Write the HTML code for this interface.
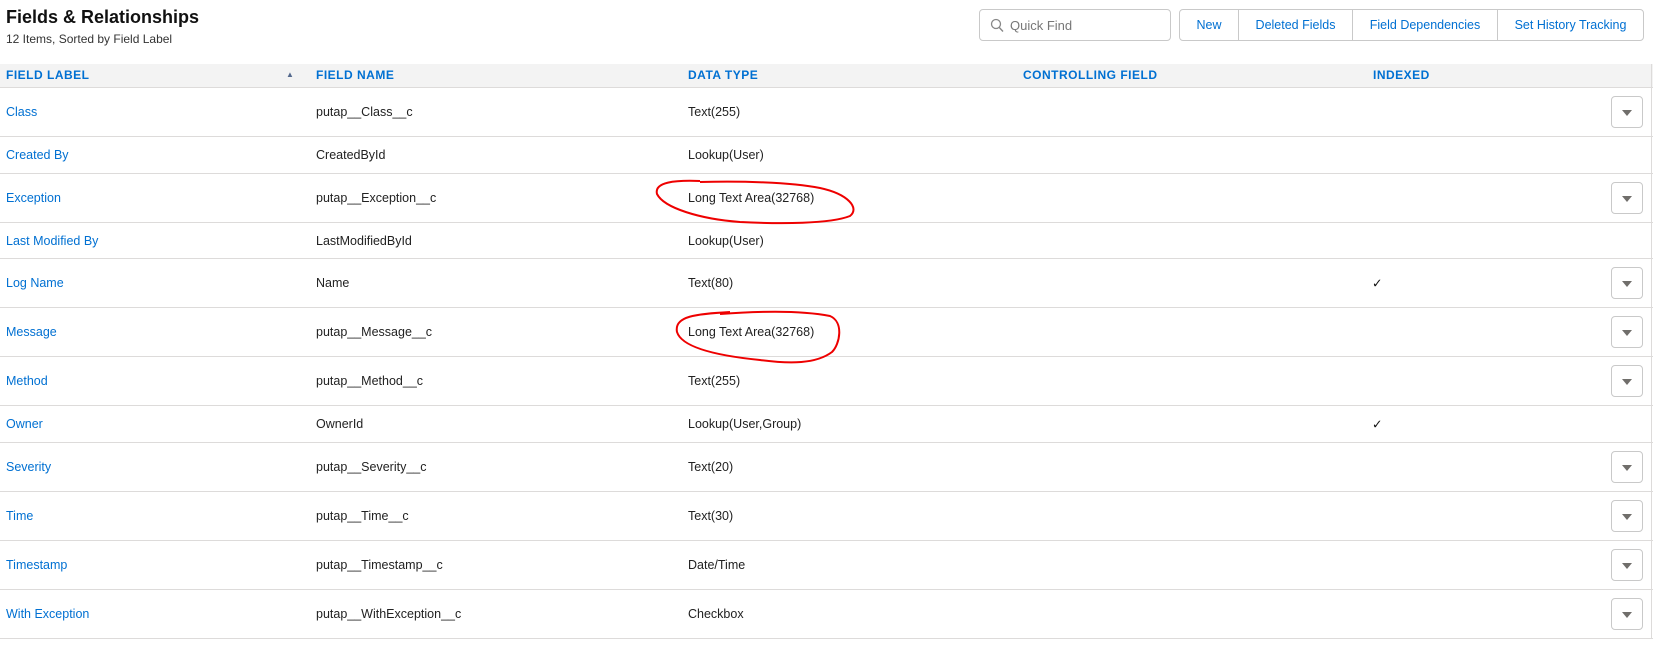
<!DOCTYPE html>
<html><head><meta charset="utf-8"><style>
*{margin:0;padding:0;box-sizing:border-box}
body{width:1653px;height:647px;background:#fff;font-family:"Segoe UI","Liberation Sans",sans-serif;font-size:12.5px;color:#16325c;position:relative;overflow:hidden}
.abs{position:absolute}
h1{position:absolute;left:6px;top:7px;font-size:18px;font-weight:bold;color:#111}
.sub{left:6px;top:32px;font-size:12px;color:#333}
.qf{left:979px;top:9px;width:192px;height:32px;border:1px solid #c9c9c9;border-radius:4px;color:#777;font-size:13px;padding:8px 0 0 30px}
.bg{left:1179px;top:9px;height:32px;width:465px;border:1px solid #c9c9c9;border-radius:4px;display:flex}
.bg div{color:#0070d2;font-size:12.5px;text-align:center;padding-top:8px;border-right:1px solid #c9c9c9}
.bg div:last-child{border-right:none}
.hdr{left:0;top:64px;width:1653px;height:24px;background:#f3f3f3;border-bottom:1px solid #dddbda}
.hdr span{position:absolute;top:4px;font-size:12px;font-weight:bold;color:#0070d2;letter-spacing:0.5px}
.row{position:absolute;left:0;width:1653px;border-bottom:1px solid #dddbda}
.row span{position:absolute;top:50%;transform:translateY(-50%)}
.l{left:6px;color:#0070d2}
.n{left:316px;color:#222}
.t{left:688px;color:#222}
.btn{position:absolute;left:1611px;top:50%;margin-top:-16px;width:32px;height:32px;border:1px solid #c9c9c9;border-radius:4px}
.btn:after{content:"";position:absolute;left:10px;top:13px;border-left:5px solid transparent;border-right:5px solid transparent;border-top:6px solid #706e6b}
.vl{left:1651px;top:64px;width:1px;height:575px;background:#dddbda}
</style></head><body>
<h1>Fields &amp; Relationships</h1>
<div class="abs sub">12 Items, Sorted by Field Label</div>
<div class="abs qf">Quick Find</div>
<svg class="abs" style="left:990px;top:18px" width="14" height="15" viewBox="0 0 14 15"><circle cx="6" cy="6" r="4.5" fill="none" stroke="#888" stroke-width="1.3"/><path d="M9.3 9.5L13 13.5" stroke="#888" stroke-width="1.4"/></svg>
<div class="abs bg"><div style="width:59px">New</div><div style="width:114px">Deleted Fields</div><div style="width:145px">Field Dependencies</div><div style="width:145px">Set History Tracking</div></div>
<div class="abs hdr"><span style="left:6px">FIELD LABEL</span><span style="left:286px;top:6px;font-size:8px;color:#54698d">▲</span><span style="left:316px">FIELD NAME</span><span style="left:688px">DATA TYPE</span><span style="left:1023px">CONTROLLING FIELD</span><span style="left:1373px">INDEXED</span></div>
<div class="abs vl"></div>

<div class="row" style="top:88px;height:49px"><span class="l">Class</span><span class="n">putap__Class__c</span><span class="t">Text(255)</span><div class="btn"></div></div>
<div class="row" style="top:137px;height:37px"><span class="l">Created By</span><span class="n">CreatedById</span><span class="t">Lookup(User)</span></div>
<div class="row" style="top:174px;height:49px"><span class="l">Exception</span><span class="n">putap__Exception__c</span><span class="t">Long Text Area(32768)</span><div class="btn"></div></div>
<div class="row" style="top:223px;height:36px"><span class="l">Last Modified By</span><span class="n">LastModifiedById</span><span class="t">Lookup(User)</span></div>
<div class="row" style="top:259px;height:49px"><span class="l">Log Name</span><span class="n">Name</span><span class="t">Text(80)</span><span style="left:1372px;color:#111">✓</span><div class="btn"></div></div>
<div class="row" style="top:308px;height:49px"><span class="l">Message</span><span class="n">putap__Message__c</span><span class="t">Long Text Area(32768)</span><div class="btn"></div></div>
<div class="row" style="top:357px;height:49px"><span class="l">Method</span><span class="n">putap__Method__c</span><span class="t">Text(255)</span><div class="btn"></div></div>
<div class="row" style="top:406px;height:37px"><span class="l">Owner</span><span class="n">OwnerId</span><span class="t">Lookup(User,Group)</span><span style="left:1372px;color:#111">✓</span></div>
<div class="row" style="top:443px;height:49px"><span class="l">Severity</span><span class="n">putap__Severity__c</span><span class="t">Text(20)</span><div class="btn"></div></div>
<div class="row" style="top:492px;height:49px"><span class="l">Time</span><span class="n">putap__Time__c</span><span class="t">Text(30)</span><div class="btn"></div></div>
<div class="row" style="top:541px;height:49px"><span class="l">Timestamp</span><span class="n">putap__Timestamp__c</span><span class="t">Date/Time</span><div class="btn"></div></div>
<div class="row" style="top:590px;height:49px"><span class="l">With Exception</span><span class="n">putap__WithException__c</span><span class="t">Checkbox</span><div class="btn"></div></div>

<svg class="abs" style="left:0;top:0" width="1653" height="647">
<path d="M700 182 C740 181 790 182 820 188 C848 194 860 208 850 216 C830 224 780 224 740 222 C700 219 664 208 657 194 C654 182 675 180 700 181" fill="none" stroke="#e00" stroke-width="2"/>
<path d="M720 314 C760 311 800 310 830 316 C844 322 840 344 832 352 C816 364 790 364 760 360 C720 356 682 348 677 332 C674 316 696 314 730 312" fill="none" stroke="#e00" stroke-width="2"/>
</svg>
</body></html>
